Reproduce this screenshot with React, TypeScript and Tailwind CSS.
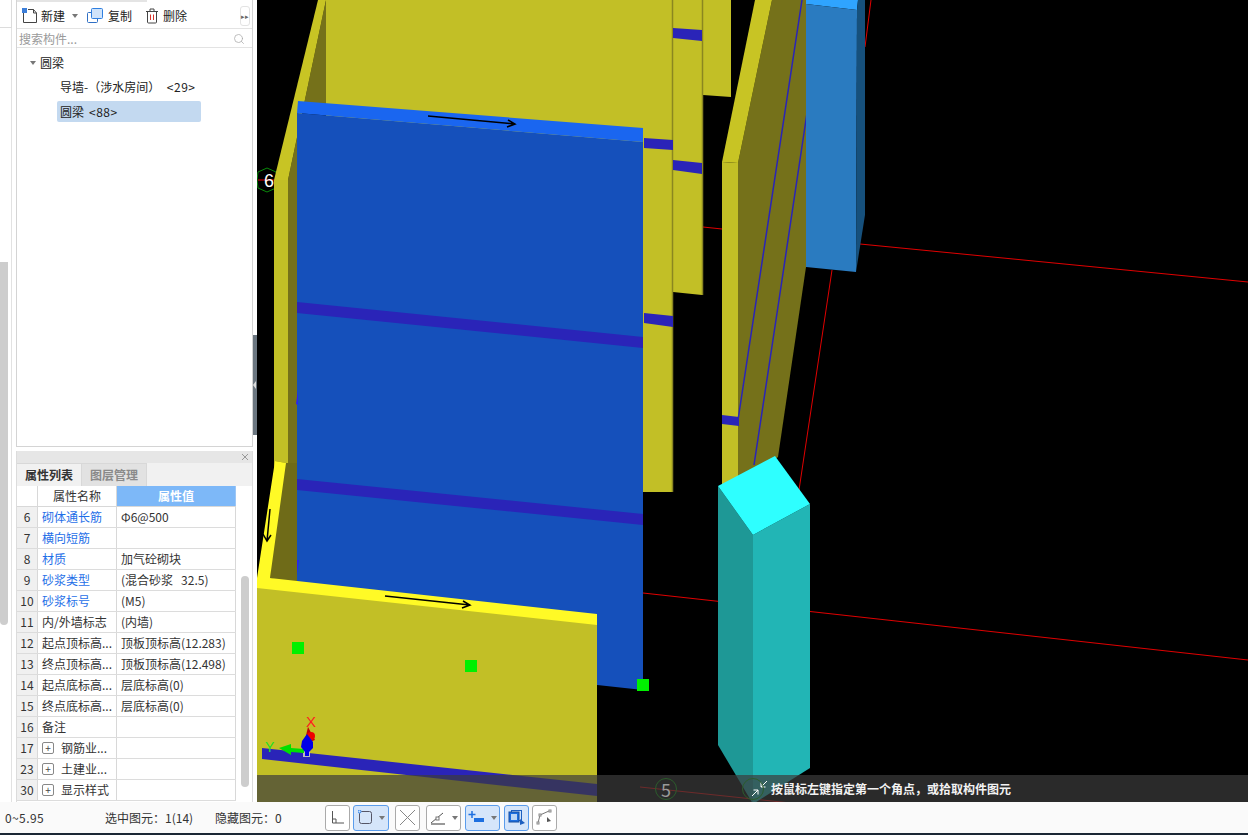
import { Search } from "lucide-react"

const rows = [
  { n: "6", name: "砌体通长筋", value: "Φ6@500", blue: true },
  { n: "7", name: "横向短筋", value: "", blue: true },
  { n: "8", name: "材质", value: "加气砼砌块", blue: true },
  { n: "9", name: "砂浆类型", value: "(混合砂浆   32.5)", blue: true },
  { n: "10", name: "砂浆标号", value: "(M5)", blue: true },
  { n: "11", name: "内/外墙标志", value: "(内墙)" },
  { n: "12", name: "起点顶标高...", value: "顶板顶标高(12.283)" },
  { n: "13", name: "终点顶标高...", value: "顶板顶标高(12.498)" },
  { n: "14", name: "起点底标高...", value: "层底标高(0)" },
  { n: "15", name: "终点底标高...", value: "层底标高(0)" },
  { n: "16", name: "备注", value: "" },
  { n: "17", name: "钢筋业...", value: "", plus: true },
  { n: "23", name: "土建业...", value: "", plus: true },
  { n: "30", name: "显示样式", value: "", plus: true },
]

function Caret() {
  return <span className="block h-0 w-0 border-x-[3px] border-t-[4px] border-x-transparent border-t-[#777]" />
}

function Toolbar() {
  return (
    <div className="flex h-[27px] shrink-0 items-center border-b border-[#e3e3e3] pl-[4px] pr-[2px] pt-[2px]">
      <svg width="16" height="16" viewBox="0 0 16 16" className="ml-px">
        <path d="M1.5 3.5v11h13V5l-3-3.5H6" fill="none" stroke="#444" />
        <path d="M11.5 1.5V5h3" fill="none" stroke="#444" />
        <rect x="0" y="0" width="5" height="5" fill="#3d7fd9" />
      </svg>
      <span className="ml-[3px] text-xs text-[#222]">新建</span>
      <div className="ml-[7px]">
        <Caret />
      </div>
      <svg width="16" height="16" viewBox="0 0 16 16" className="ml-[9px]">
        <rect x="0.5" y="4.5" width="10" height="10" rx="1" fill="none" stroke="#2f6fc4" />
        <rect x="4.5" y="0.5" width="11" height="10" rx="1" fill="#cfe3fa" stroke="#2f7fe0" />
      </svg>
      <span className="ml-[5px] text-xs text-[#222]">复制</span>
      <svg width="14" height="16" viewBox="0 0 14 16" className="ml-[13px]">
        <path d="M1 3.5h12M5 3V1h4v2M2.5 3.5V14a1 1 0 0 0 1 1h7a1 1 0 0 0 1-1V3.5" fill="none" stroke="#444" />
        <path d="M5.5 6.5v5.5M8.5 6.5v5.5" stroke="#d9342b" />
      </svg>
      <span className="ml-[4px] text-xs text-[#222]">删除</span>
      <div className="ml-auto flex h-[20px] w-[10px] items-center justify-center rounded-[3px] border border-[#e3e3e3] text-[7px] leading-none text-[#666]">
        ▸▸
      </div>
    </div>
  )
}

function TreePanel() {
  return (
    <div className="flex h-[447px] shrink-0 flex-col border border-t-0 border-[#d4d4d4] bg-white">
      <div className="h-[2px] w-[130px] shrink-0 bg-[#e4e4e4]" />
      <Toolbar />
      <div className="flex h-[19px] shrink-0 items-center justify-between border-b border-[#e3e3e3] pl-[2px] pr-[7px] pt-[2px] text-xs text-[#9a9a9a]">
        <span>搜索构件...</span>
        <Search size={12} strokeWidth={1.5} className="text-[#aaa]" />
      </div>
      <div className="pl-[13px] pt-[4px]">
        <div className="flex h-[21px] items-center gap-[4px] text-xs text-[#222]">
          <Caret />
          <span>圆梁</span>
        </div>
        <div className="mt-[3px] flex h-[21px] items-center whitespace-pre pl-[30px] text-xs text-[#222]">
          导墙-（涉水房间） <span className="ml-[4px] tracking-[0.5px]">&lt;29&gt;</span>
        </div>
        <div className="ml-[27px] mt-[4px] flex h-[21px] w-[144px] items-center rounded-[2px] bg-[#c3d9f0] pl-[3px] text-xs text-[#222]">
          圆梁 <span className="ml-[5px] tracking-[0.5px]">&lt;88&gt;</span>
        </div>
      </div>
    </div>
  )
}

function PropertyPanel() {
  return (
    <div className="relative mt-[4px] flex min-h-0 flex-1 flex-col border-x border-[#dcdcdc] bg-white">
      <div className="flex h-[12px] shrink-0 items-center justify-end bg-[#e6e6e6] pr-[3px]">
        <svg width="8" height="8" viewBox="0 0 8 8">
          <path d="M1 1l6 6M7 1l-6 6" stroke="#999" />
        </svg>
      </div>
      <div className="flex h-[23px] shrink-0 bg-[#f1f1f1]">
        <div className="flex w-[65px] items-center justify-center border-r border-t border-[#d8d8d8] text-xs font-bold text-[#333]">属性列表</div>
        <div className="flex w-[65px] items-center justify-center border-r border-t border-[#d8d8d8] bg-[#e2e2e2] text-xs font-bold text-[#8a8a8a]">图层管理</div>
      </div>
      <div className="w-[219px]">
        <div className="flex h-[21px] border-b border-[#d8d8d8] text-xs">
          <div className="w-[21px] border-r border-[#d8d8d8]" />
          <div className="flex w-[79px] items-center justify-center border-r border-[#d8d8d8] text-[#333]">属性名称</div>
          <div className="flex flex-1 items-center justify-center border-r border-[#9cc6f5] bg-[#7db8f8] font-bold text-white">属性值</div>
        </div>
        {rows.map((r) => (
          <div key={r.n} className="flex h-[21px] border-b border-[#dcdcdc] text-xs">
            <div className="flex w-[21px] items-center justify-center border-r border-[#d8d8d8] bg-[#f0f0f0] text-[#333]">{r.n}</div>
            <div className={`flex w-[79px] items-center overflow-hidden whitespace-nowrap border-r border-[#d8d8d8] pl-[4px] ${r.blue ? "text-[#1f6fe8]" : "text-[#333]"}`}>
              {r.plus && (
                <span className="mr-[7px] flex h-[12px] w-[12px] shrink-0 items-center justify-center rounded-[2px] border border-[#888] text-[10px] leading-none text-[#444]">+</span>
              )}
              {r.name}
            </div>
            <div className="flex flex-1 items-center overflow-hidden whitespace-pre border-r border-[#d8d8d8] pl-[4px] text-[#333]">{r.value}</div>
          </div>
        ))}
      </div>
      <div className="absolute left-[224px] top-[125px] h-[211px] w-[8px] rounded-[4px] bg-[#cdcdcd]" />
    </div>
  )
}

function Scene() {
  return (
    <svg viewBox="257 0 991 802" width="991" height="802" className="block">
      <rect x="257" y="0" width="991" height="802" fill="#000" />
      {/* grid lines */}
      <g stroke="#e00000" fill="none" strokeWidth="1">
        <path d="M860 244L1248 282M703 227L722 229M865 47L871 0M832 270L799 490M643 593L1248 660M640 787L800 804" />
      </g>

      {/* axis number 6 */}
      <polygon points="267,168 276,172 279,180 276,188 267,192 258,188 257,180 258,172" fill="none" stroke="#0a8a0a" />
      <path d="M258 180H274" stroke="#e00000" />
      <text x="264" y="187" fontSize="18" fill="#fff" fontFamily="Liberation Sans, sans-serif">6</text>

      {/* back columns */}
      <rect x="326" y="0" width="347" height="160" fill="#c2bf26" />
      <rect x="643" y="0" width="30" height="492" fill="#c2bf26" />
      <polygon points="643,489 673,492 673,400 643,400" fill="#c2bf26" />
      <polygon points="673,0 703,0 702,295 673,292" fill="#c2bf26" />
      <polygon points="703,0 731,0 731,97 703,95" fill="#c2bf26" />
      <path d="M672.5 0V492M702.5 0V295" stroke="#8a8620" strokeWidth="1.5" />
      <polygon points="644,138 673,140 673,150 644,148" fill="#2a24b8" />
      <polygon points="644,313 673,316 673,327 644,323" fill="#2a24b8" />
      <polygon points="673,28 702,30 702,41 673,38" fill="#2a24b8" />
      <polygon points="673,160 702,163 702,174 673,170" fill="#2a24b8" />

      {/* left wall */}
      <polygon points="288,180 326,0 326,106 297,110 297,590 288,590" fill="#75711a" />
      <polygon points="274,180 318,0 326,0 288,180" fill="#c8c424" />
      <rect x="274" y="180" width="14" height="290" fill="#c2bf26" />

      {/* blue wall */}
      <polygon points="297,113 643,142 643,690 297,652" fill="#1550bb" />
      <polygon points="298,101 643,128 643,142 297,113" fill="#1a66f0" />
      <polygon points="297,302 643,337 643,348 297,313" fill="#2a24b8" />
      <polygon points="297,479 643,514 643,525 297,490" fill="#2a24b8" />
      <polygon points="296,404 298,390 298,405" fill="#2a24f0" />
      <polygon points="293,581 297,560 299,560 296,582" fill="#2a24f0" />

      {/* right wall */}
      <polygon points="738,163 772,0 806,0 806,267 778,457 738,490" fill="#75711a" />
      <polygon points="722,162 755,0 772,0 738,163" fill="#c8c424" />
      <polygon points="722,162 738,163 738,490 722,490" fill="#c2bf26" />
      <polygon points="722,415 739,417 739,426 722,424" fill="#2a24b8" />
      <path d="M802 0L738 420M807 113L779 300L754 465" stroke="#2a24b8" strokeWidth="1.5" fill="none" />

      {/* blue box */}
      <polygon points="806,0 858,0 857,10 806,4" fill="#2fa4ff" />
      <polygon points="806,4 857,10 856,272 806,267" fill="#2a7bc0" />
      <polygon points="857,10 858,0 865,0 865,215 856,272" fill="#16507c" />

      {/* cyan column */}
      <polygon points="718,486 753,535 753,804 718,745" fill="#1e9896" />
      <polygon points="753,535 810,504 810,768 753,804" fill="#22b5b5" />
      <polygon points="718,486 775,456 810,504 753,535" fill="#2effff" />

      {/* front wall */}
      <polygon points="275,461 286,463 297,463 297,585 270,578" fill="#6f6b18" />
      <polygon points="257,586 597,622 597,802 257,802" fill="#c2bf26" />
      <polygon points="275,461 286,463 270,578 597,614 597,625 257,588 257,578" fill="#fffa26" />
      <polygon points="262,748 597,784 597,796 262,759" fill="#2a24b8" />

      {/* direction arrows */}
      <g stroke="#000" strokeWidth="1.5" fill="none">
        <path d="M428 116L515 124M508 120L515 124L507 127" />
        <path d="M385 596L470 605M463 601L470 605L462 608" />
        <path d="M270 509L267 541M263 534L267 541L271 535" />
      </g>

      {/* grips */}
      <rect x="292" y="642" width="12" height="12" fill="#00f000" />
      <rect x="465" y="660" width="12" height="12" fill="#00f000" />
      <rect x="637" y="679" width="12" height="12" fill="#00f000" />

      {/* gizmo */}
      <rect x="303" y="744" width="7" height="13" fill="#bbb" />
      <polygon points="279,748 291,744 291,748 304,749 304,753 291,752 291,755" fill="#00e000" />
      <polygon points="308,727 315,740 304,744" fill="#c00000" />
      <circle cx="311" cy="736" r="4" fill="#f00000" />
      <polygon points="307,734 313,742 313,748 309,752 309,756 305,756 305,752 301,747 302,741" fill="#0000e8" />
      <text x="306" y="727" fontSize="15" fill="#ff2020" fontFamily="Liberation Sans, sans-serif">X</text>
      <text x="265" y="752" fontSize="14" fill="#20e020" fontFamily="Liberation Sans, sans-serif">Y</text>
    </svg>
  )
}

function Hint() {
  return (
    <div className="absolute inset-x-0 bottom-0 flex h-[27px] items-center bg-[#3c3c3c]/70 pl-[494px]">
      <svg width="17" height="17" viewBox="0 0 17 17">
        <path d="M16 1L10 7M10 2.5V7H14.5M1 16L7 10M2.5 10H7V14.5" stroke="#fff" fill="none" />
      </svg>
      <span className="ml-[3px] text-xs font-bold text-[#f2f2f2]">按鼠标左键指定第一个角点，或拾取构件图元</span>
      <div className="absolute left-[398px] top-[3px] flex h-[22px] w-[22px] items-center justify-center rounded-full border border-[#2c5c2c] text-lg leading-none text-[#999]">5</div>
      <div className="absolute left-[485px] top-[3px] h-[22px] w-[22px] rounded-full border border-[#2c5c2c]" />
    </div>
  )
}

function ToolButton({ active, width, caret, children }: { active?: boolean; width: string; caret?: boolean; children: React.ReactNode }) {
  return (
    <div className={`flex h-[26px] items-center justify-center gap-[6px] rounded-[3px] border ${width} ${active ? "border-[#5a9cec] bg-[#d5e5fa]" : "border-[#aaa] bg-white"}`}>
      {children}
      {caret && <Caret />}
    </div>
  )
}

function StatusBar() {
  return (
    <div className="flex h-[31px] shrink-0 items-center bg-[#fafafa] pl-[5px] text-xs text-[#333]">
      <span className="w-[100px] tracking-[0.4px]">0~5.95</span>
      <span className="w-[110px]">选中图元：1(14)</span>
      <span className="w-[110px]">隐藏图元：0</span>
      <div className="flex items-center gap-[3px]">
        <ToolButton width="w-[25px]">
          <svg width="15" height="15" viewBox="0 0 15 15">
            <path d="M2.5 1V13H14M2.5 9H6V13" fill="none" stroke="#555" />
          </svg>
        </ToolButton>
        <ToolButton width="w-[36px]" active caret>
          <svg width="15" height="15" viewBox="0 0 15 15">
            <rect x="1.5" y="1.5" width="12" height="12" rx="2" fill="none" stroke="#556" />
            <circle cx="1.5" cy="1.5" r="1.5" fill="#d5e5fa" stroke="#2f80e8" />
          </svg>
        </ToolButton>
        <div className="ml-[3px]">
          <ToolButton width="w-[25px]">
            <svg width="17" height="17" viewBox="0 0 17 17">
              <path d="M1 1L16 16M16 1L1 16" stroke="#888" />
            </svg>
          </ToolButton>
        </div>
        <div className="ml-[3px]">
          <ToolButton width="w-[35px]" caret>
            <svg width="16" height="16" viewBox="0 0 16 16">
              <path d="M1 14H15" stroke="#999" strokeWidth="2" />
              <path d="M1 13L13 3" stroke="#555" />
              <rect x="6" y="7" width="3" height="3" fill="#fff" stroke="#777" />
            </svg>
          </ToolButton>
        </div>
        <div className="ml-px">
          <ToolButton width="w-[35px]" active caret>
            <svg width="17" height="15" viewBox="0 0 17 15">
              <path d="M4 1V8M0.5 4.5H7.5" stroke="#1d6fe0" strokeWidth="1.5" />
              <rect x="6" y="8" width="10" height="4" fill="#1d6fe0" />
            </svg>
          </ToolButton>
        </div>
        <div className="ml-px">
          <ToolButton width="w-[25px]" active>
            <svg width="17" height="17" viewBox="0 0 17 17">
              <rect x="3.5" y="1.5" width="10" height="10" fill="#cfe3fa" stroke="#1d5fc0" />
              <rect x="1" y="3" width="10" height="10" fill="#1d6fe0" stroke="#174f9f" />
              <rect x="3" y="5" width="6" height="6" fill="#bcd6f5" />
              <polygon points="12,10 17,14 12,16" fill="#1d5fc0" />
            </svg>
          </ToolButton>
        </div>
        <ToolButton width="w-[25px]">
          <svg width="17" height="17" viewBox="0 0 17 17">
            <path d="M2 14L4 6L13 2" fill="none" stroke="#777" />
            <rect x="1" y="13" width="2" height="2" fill="#fff" stroke="#888" />
            <rect x="3" y="5" width="2" height="2" fill="#fff" stroke="#888" />
            <rect x="13" y="1" width="2" height="2" fill="#fff" stroke="#888" />
            <polygon points="11,8 15,12 11,13" fill="#555" />
          </svg>
        </ToolButton>
      </div>
    </div>
  )
}

export default function App() {
  return (
    <div className="flex h-[835px] w-[1248px] flex-col overflow-hidden bg-white font-['Noto_Sans_CJK_SC',sans-serif]">
      <div className="flex h-[802px] shrink-0">
        <div className="relative w-[16px] shrink-0 bg-white">
          <div className="h-[28px] w-[12px] border-b border-r border-[#dcdcdc]" />
          <div className="absolute bottom-0 left-[11px] top-[28px] w-px bg-[#e2e2e2]" />
          <div className="absolute left-0 top-[262px] h-[363px] w-[8px] rounded-b-[4px] bg-[#cdcdcd]" />
        </div>
        <div className="flex w-[237px] shrink-0 flex-col">
          <TreePanel />
          <PropertyPanel />
        </div>
        <div className="w-[4px] shrink-0 pt-[335px]">
          <div className="flex h-[100px] w-full items-center bg-[#6b7680]">
            <span className="h-0 w-0 border-y-[4px] border-r-[3px] border-y-transparent border-r-[#ddd]" />
          </div>
        </div>
        <div className="relative min-w-0 flex-1 overflow-hidden">
          <Scene />
          <Hint />
        </div>
      </div>
      <StatusBar />
      <div className="h-[2px] shrink-0 bg-[#1b2735]" />
    </div>
  )
}
